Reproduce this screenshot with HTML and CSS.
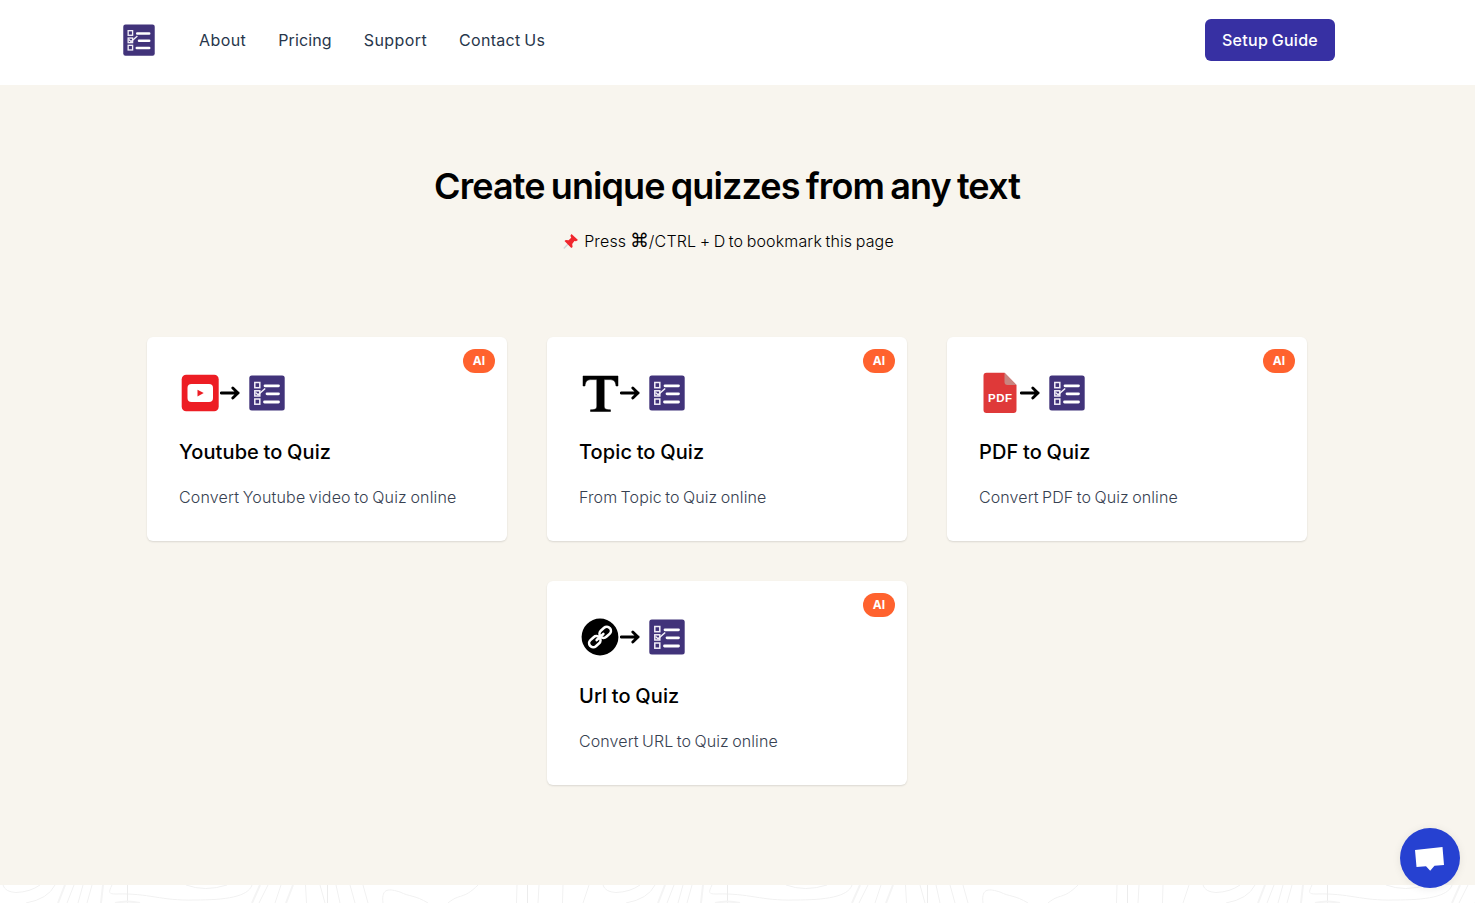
FILE: index.html
```html
<!DOCTYPE html>
<html lang="en">
<head>
  <meta charset="UTF-8">
  <title>Create unique quizzes from any text</title>
  <link rel="stylesheet" href="styles.css">
</head>
<body>

<!-- shared icons -->
<svg class="sprite" width="0" height="0" aria-hidden="true">
  <symbol id="quiz" viewBox="0 0 36 36">
    <rect x=".3" y=".6" width="35.4" height="35" rx="2.5" fill="#41337a"/>
    <g fill="none" stroke="#f2eff8" stroke-width="1.5">
      <rect x="5.8" y="7.500" width="5" height="5.200"/>
      <rect x="5.8" y="15.800" width="5" height="5.200"/>
      <rect x="5.8" y="24" width="5" height="5.200"/>
      <path d="M6.5 17.500l2.6 2.3L16.2 13.500"/>
    </g>
    <path d="M16 10.800h13.500M18 18.800h11.5M15.500 27h14" stroke="#fff" stroke-width="2.8" stroke-linecap="round"/>
  </symbol>
  <symbol id="arrow" viewBox="0 0 20 14">
    <path d="M1.2 7h17M12.8 1.900L18 7l-5.200 5.100" fill="none" stroke="#000" stroke-width="2.8" stroke-linecap="round" stroke-linejoin="round"/>
  </symbol>
</svg>

<header class="header">
  <a href="#" class="logo"><svg width="32" height="32"><use href="#quiz"/></svg></a>
  <nav class="nav">
    <a href="#" class="about">About</a>
    <a href="#" class="pricing">Pricing</a>
    <a href="#" class="support">Support</a>
    <a href="#" class="contact">Contact Us</a>
  </nav>
  <a href="#" class="guide-button">Setup Guide</a>
</header>

<main class="tools">
  <h1>Create unique quizzes from any text</h1>
  <p class="bookmark">
    <svg width="16" height="17" viewBox="0 0 16 17">
      <path d="M5.5 10.5L.8 15.5" stroke="#cfd5d8" stroke-width="1.4"/>
      <path d="M8.5 1l6.5 6-2 1.2-1.6-.3-2.2 3 .4 3.2-1.3.9-6.8-7 1.3-.9 2.8.2 2.6-2.6-.8-2z" fill="#f0262d"/>
    </svg>
    <span>Press <span class="cmd">⌘</span>/CTRL + D to bookmark this page</span>
  </p>

  <div class="cards">
    <a href="#" class="card">
      <span class="badge">AI</span>
      <div class="icons">
        <svg width="40" height="42" viewBox="0 0 40 42">
          <rect x="1.7" y="2.7" width="37" height="36.6" rx="4.5" fill="#ed1d24"/>
          <rect x="7.5" y="12" width="25.5" height="18" rx="4" fill="#fff"/>
          <path d="M17.5 17.7v6.8l6.2-3.4z" fill="#ed1d24"/>
        </svg>
        <svg class="arrow" width="20" height="14"><use href="#arrow"/></svg>
        <svg width="36" height="36"><use href="#quiz"/></svg>
      </div>
      <h2>Youtube to Quiz</h2>
      <p class="video">Convert Youtube video to Quiz online</p>
    </a>

    <a href="#" class="card">
      <span class="badge">AI</span>
      <div class="icons">
        <svg width="40" height="42" viewBox="0 0 40 42">
          <path d="M3 4h35v10h-2c-.5-5-2.3-6.4-7-6.4h-4.8V34c0 3 1.4 3.600 6.300 3.800V39.500h-20v-1.700c4.900-.2 6.300-.8 6.300-3.800V7.600H12c-4.700 0-6.500 1.400-7 6.400H3z" fill="#000" stroke="#000" stroke-width=".5"/>
        </svg>
        <svg class="arrow" width="20" height="14"><use href="#arrow"/></svg>
        <svg width="36" height="36"><use href="#quiz"/></svg>
      </div>
      <h2>Topic to Quiz</h2>
      <p>From Topic to Quiz online</p>
    </a>

    <a href="#" class="card">
      <span class="badge">AI</span>
      <div class="icons">
        <svg width="40" height="42" viewBox="0 0 40 42">
          <path d="M6.500.7H24.500L36.500 13v25a3 3 0 0 1-3 3h-27a3 3 0 0 1-3-3V3.700a3 3 0 0 1 3-3z" fill="#df3939"/>
          <path d="M24.500.7L36.500 13H27.500a3 3 0 0 1-3-3z" fill="#c98580"/>
          <text x="20" y="30" class="pdf-label" textLength="24">PDF</text>
        </svg>
        <svg class="arrow" width="20" height="14"><use href="#arrow"/></svg>
        <svg width="36" height="36"><use href="#quiz"/></svg>
      </div>
      <h2>PDF to Quiz</h2>
      <p>Convert PDF to Quiz online</p>
    </a>

    <a href="#" class="card">
      <span class="badge">AI</span>
      <div class="icons">
        <svg width="40" height="42" viewBox="0 0 40 42">
          <circle cx="20" cy="21" r="18.4" fill="#000"/>
          <g transform="rotate(-42 20 21)" fill="none" stroke="#fff" stroke-width="2.6">
            <rect x="6.8" y="16.900" width="12.400" height="8.200" rx="4"/>
            <rect x="20.800" y="16.900" width="12.400" height="8.200" rx="4"/>
            <path d="M15.5 21h9" stroke-linecap="round"/>
          </g>
        </svg>
        <svg class="arrow" width="20" height="14"><use href="#arrow"/></svg>
        <svg width="36" height="36"><use href="#quiz"/></svg>
      </div>
      <h2>Url to Quiz</h2>
      <p>Convert URL to Quiz online</p>
    </a>
  </div>
</main>

<!-- topographic lines -->
<section class="contours">
  <svg width="100%" height="18">
    <defs>
      <pattern id="topo" width="600" height="18" patternUnits="userSpaceOnUse">
        <g fill="none" stroke="#f1f1f1">
          <path d="M3 0Q5 7 16 7.500Q30 7 40 0M26 18Q48 14 55 0M67 18L74 0M78 18L83 0M87 18L92 0"/>
          <path d="M112 0C108 8 109 9 116 9C150 8 160 16 195 15C225 15 248 12 252 0M186 0Q205 7 227 0"/>
          <path d="M259 18L268 0M275 18L281 0M305.500 0L306.500 18M320 0L325 18M336 0L340 18M350 0L355 18M363 0L368 18"/>
          <path d="M383 18C381 2 390 4 400 7C410 12 415 10 428 18M448 18C460 8 463 15 478 0M517 0L516.500 18M539 0L538 18M563 0L562.500 18M583 18L589 0"/>
          <path d="M127.500 0v18M327.500 0v18M527.500 0v18" stroke="#ececec"/>
          <path d="M58 18L65 0M101 18L103 0M115 18Q127 15 140 18M252 18L260 0M286 18L293 0" stroke-width="2" stroke="#f4f4f4"/>
        </g>
      </pattern>
    </defs>
    <rect width="100%" height="18" fill="url(#topo)"/>
  </svg>
</section>

<button class="chat" aria-label="Chat">
  <svg width="60" height="60" viewBox="0 0 60 60"><path d="M15 22l27.5-3L44 37l-9.5.8-4.3 5-4.2-4.500-9.500.7z" fill="#fff"/></svg>
</button>

</body>
</html>
```
FILE: styles.css
```css
* {
  box-sizing: border-box;
}

body {
  margin: 0;
  height: 903px;
  overflow: hidden;
  font-family: Inter, "Open Sans", sans-serif;
  font-size: 16px;
  color: #000;
}

a {
  color: inherit;
  text-decoration: none;
}

svg {
  display: block;
}

.sprite {
  position: absolute;
}

.header {
  height: 85px;
  padding: 0 140px 5px 123px;
  display: flex;
  align-items: center;
  background: #fff;
}

.nav {
  display: flex;
  gap: 32px;
  margin-left: 44px;
  color: #27364b;
}

.about,
.support {
  letter-spacing: 0.4px;
}

.pricing {
  letter-spacing: 0.15px;
}

.contact {
  letter-spacing: 0.3px;
  word-spacing: -1px;
}

.guide-button {
  margin-left: auto;
  width: 130px;
  height: 42px;
  line-height: 42px;
  text-align: center;
  border-radius: 6px;
  background: #3730a3;
  color: #fff;
  font-weight: 500;
  letter-spacing: 0.3px;
  word-spacing: -1px;
}

.tools {
  height: 800px;
  padding: 80px 21px 0 0;
  background: #f8f5ee;
}

h1 {
  margin: 0;
  font-size: 36px;
  line-height: 42px;
  font-weight: 600;
  letter-spacing: -0.9px;
  word-spacing: -2px;
  text-align: center;
}

.bookmark {
  display: flex;
  justify-content: center;
  align-items: center;
  gap: 5px;
  height: 24px;
  margin: 22px 0 84px;
  padding-left: 3px;
  font-weight: 300;
  letter-spacing: 0.15px;
  word-spacing: -1.2px;
  line-height: 24px;
  white-space: nowrap;
}

.cmd {
  font-family: "DejaVu Sans", sans-serif;
  font-size: 19px;
  line-height: 1;
}

.cards {
  width: 1160px;
  margin: 0 auto;
  display: flex;
  flex-wrap: wrap;
  justify-content: center;
  gap: 40px;
}

.card {
  position: relative;
  width: 360px;
  height: 204px;
  padding: 35px 32px 0;
  border-radius: 6px;
  background: #fff;
  box-shadow: 0 1px 2px rgba(0, 0, 0, 0.12);
}

.badge {
  position: absolute;
  top: 12px;
  right: 12px;
  width: 32px;
  height: 24px;
  line-height: 24px;
  border-radius: 12px;
  background: #ff622e;
  color: #fff;
  font-size: 12px;
  font-weight: 700;
  text-align: center;
}

.icons {
  display: flex;
  align-items: center;
  height: 42px;
  margin-left: 1px;
}

.arrow {
  margin-right: 9px;
}

.pdf-label {
  font-family: "Liberation Sans", sans-serif;
  font-size: 11.5px;
  font-weight: 700;
  fill: #fff;
  text-anchor: middle;
}

.card h2 {
  margin: 24px 0 17px;
  font-size: 20px;
  line-height: 28px;
  font-weight: 500;
  letter-spacing: 0.1px;
  word-spacing: -0.8px;
}

.card p {
  margin: 0;
  line-height: 28px;
  font-weight: 300;
  letter-spacing: 0.1px;
  word-spacing: -1.2px;
  color: #374151;
  white-space: nowrap;
}

.card .video {
  letter-spacing: 0.18px;
}

.contours {
  height: 18px;
  background: #fff;
}

.chat {
  position: fixed;
  right: 15px;
  bottom: 15px;
  width: 60px;
  height: 60px;
  padding: 0;
  border: none;
  border-radius: 50%;
  background: #2641d1;
  box-shadow: 0 1px 8px rgba(0, 0, 0, 0.08);
}
```
